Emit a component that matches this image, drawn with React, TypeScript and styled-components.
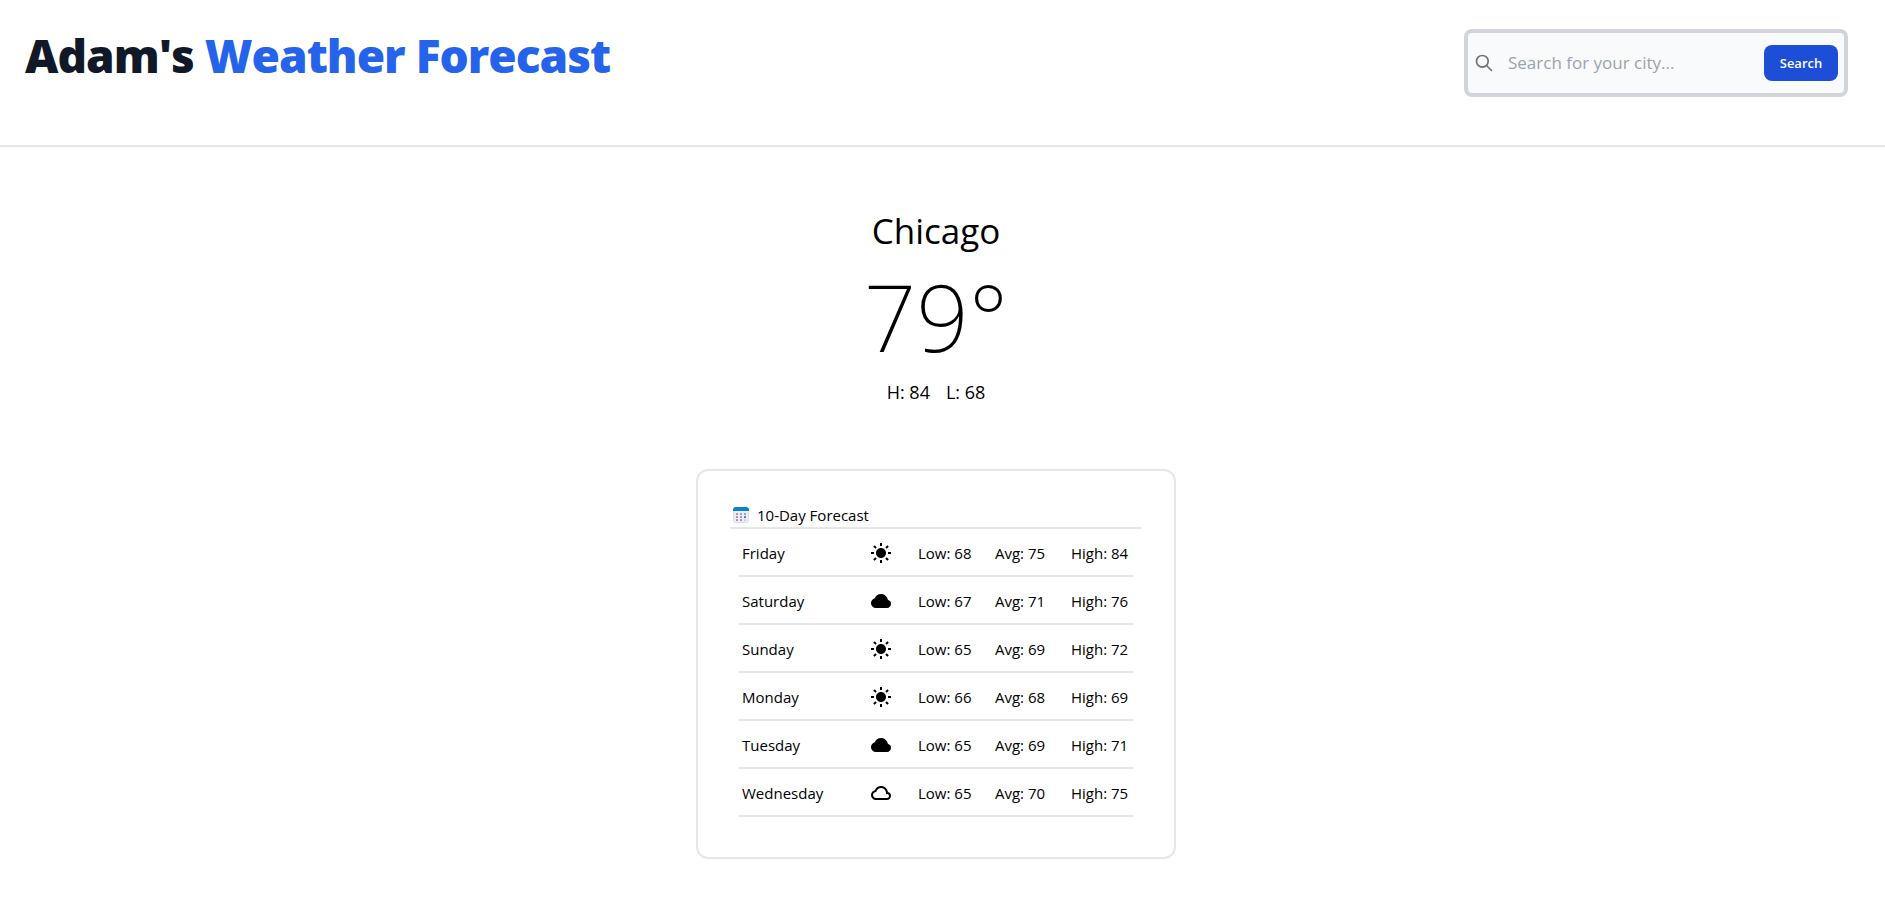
import React from "react";
import styled, { createGlobalStyle } from "styled-components";
import { BiCloud, BiSolidCloud, BiSolidSun } from "react-icons/bi";

const GlobalStyle = createGlobalStyle`
  *, *::before, *::after { box-sizing: border-box; }
  body {
    margin: 0;
    background: #fff;
    color: #000;
    font-family: "Segoe UI", "Open Sans", "Noto Sans", sans-serif;
    font-size: 15px;
    line-height: 24px;
  }
  h1, h2, p { margin: 0; font-weight: 400; }
`;

const Header = styled.header`
  display: flex;
  justify-content: space-between;
  align-items: flex-start;
  padding: 29px 37px 48px 25px;
  border-bottom: 2px solid #e5e7eb;
`;

const Title = styled.h1`
  && { font-weight: 800; }
  font-size: 46px;
  line-height: 52px;
  letter-spacing: -1px;
  color: #111827;
`;

const Accent = styled.span`
  color: #2563eb;
`;

const SearchForm = styled.form`
  display: flex;
  align-items: center;
  width: 384px;
  height: 68px;
  padding: 0 6px;
  border: 4px solid #d1d5db;
  border-radius: 8px;
  background: #f9fafb;
`;

const SearchIcon = styled.svg`
  flex: none;
  width: 20px;
  height: 20px;
  color: #6b7280;
`;

const SearchInput = styled.input`
  flex: 1;
  min-width: 0;
  padding: 0 14px;
  border: 0;
  outline: 0;
  background: transparent;
  font-family: inherit;
  font-size: 17px;
  line-height: 28px;
  color: #111827;
  &::placeholder { color: #9ca3af; opacity: 1; }
`;

const SearchButton = styled.button`
  width: 74px;
  height: 36px;
  padding: 0;
  border: 0;
  border-radius: 8px;
  background: #1d4ed8;
  color: #fff;
  font-family: inherit;
  font-size: 13px;
  font-weight: 600;
  line-height: 20px;
`;

const Main = styled.main`
  display: flex;
  flex-direction: column;
  align-items: center;
  padding: 64px 13px 44px 0;
`;

const City = styled.h2`
  font-size: 35px;
  line-height: 40px;
`;

const Temperature = styled.p`
  && { font-weight: 200; }
  font-family: "Segoe UI", "Noto Sans", sans-serif;
  font-size: 92px;
  line-height: 96px;
  margin-top: 18px;
`;

const Range = styled.p`
  display: flex;
  gap: 16px;
  margin-top: 13px;
  font-size: 18px;
  line-height: 28px;
`;

const Card = styled.section`
  width: 480px;
  max-width: 100%;
  margin-top: 63px;
  padding: 32px 32px 40px;
  border: 2px solid #e5e7eb;
  border-radius: 12px;
`;

const CardHeading = styled.h2`
  display: flex;
  align-items: center;
  gap: 8px;
  padding-left: 3px;
  border-bottom: 2px solid #e5e7eb;
  font-size: 15px;
`;

const ForecastTable = styled.table`
  width: calc(100% - 16px);
  margin: 0 8px;
  table-layout: fixed;
  border-collapse: separate;
  border-spacing: 0;
`;

const Cell = styled.td<{ $width?: number }>`
  width: ${(p) => (p.$width ? `${p.$width}px` : "auto")};
  height: 48px;
  padding: 2px 0 0;
  border-bottom: 2px solid #e5e7eb;
  white-space: nowrap;
  text-align: left;
  font-weight: 400;
  &:first-child { padding-left: 4px; }
  svg { display: block; }
`;

const CalendarIcon = () => (
  <svg width="16" height="16" viewBox="0 0 16 16" aria-hidden="true">
    <rect width="16" height="16" rx="3" fill="#e3dcee" />
    <rect x="1" y="4" width="14" height="11" rx="1" fill="#f1ebf8" />
    <path d="M0 4V3a3 3 0 0 1 3-3h10a3 3 0 0 1 3 3v1z" fill="#0883ce" />
    {[6, 9, 12].map((y) =>
      [3, 7, 11].map((x) => (
        <rect
          key={`${x}-${y}`}
          x={x}
          y={y}
          width="2"
          height="2"
          rx="0.4"
          fill={x === 11 && y === 9 ? "#0883ce" : x === 11 && y === 12 ? "#cfc6d8" : "#998ea4"}
        />
      ))
    )}
  </svg>
);

const icons = { sun: BiSolidSun, cloud: BiSolidCloud, overcast: BiCloud };

type Day = { day: string; icon: keyof typeof icons; low: number; avg: number; high: number };

const days: Day[] = [
  { day: "Friday", icon: "sun", low: 68, avg: 75, high: 84 },
  { day: "Saturday", icon: "cloud", low: 67, avg: 71, high: 76 },
  { day: "Sunday", icon: "sun", low: 65, avg: 69, high: 72 },
  { day: "Monday", icon: "sun", low: 66, avg: 68, high: 69 },
  { day: "Tuesday", icon: "cloud", low: 65, avg: 69, high: 71 },
  { day: "Wednesday", icon: "overcast", low: 65, avg: 70, high: 75 },
];

export default function App() {
  return (
    <>
      <GlobalStyle />
      <Header>
        <Title>
          Adam's <Accent>Weather Forecast</Accent>
        </Title>
        <SearchForm role="search" onSubmit={(e) => e.preventDefault()}>
          <SearchIcon viewBox="0 0 24 24" fill="none" stroke="currentColor" aria-hidden="true">
            <path strokeLinecap="round" strokeLinejoin="round" strokeWidth="2" d="M21 21l-6-6m2-5a7 7 0 11-14 0 7 7 0 0114 0z" />
          </SearchIcon>
          <SearchInput type="search" aria-label="City" placeholder="Search for your city..." />
          <SearchButton type="submit">Search</SearchButton>
        </SearchForm>
      </Header>
      <Main>
        <City>Chicago</City>
        <Temperature>79°</Temperature>
        <Range>
          <span>H: 84</span>
          <span>L: 68</span>
        </Range>
        <Card>
          <CardHeading>
            <CalendarIcon />
            10-Day Forecast
          </CardHeading>
          <ForecastTable>
            <tbody>
              {days.map(({ day, icon, low, avg, high }) => {
                const Icon = icons[icon];
                return (
                  <tr key={day}>
                    <Cell as="th" scope="row" $width={131}>{day}</Cell>
                    <Cell $width={49}><Icon size={24} aria-hidden="true" /></Cell>
                    <Cell $width={77}>Low: {low}</Cell>
                    <Cell $width={76}>Avg: {avg}</Cell>
                    <Cell>High: {high}</Cell>
                  </tr>
                );
              })}
            </tbody>
          </ForecastTable>
        </Card>
      </Main>
    </>
  );
}
